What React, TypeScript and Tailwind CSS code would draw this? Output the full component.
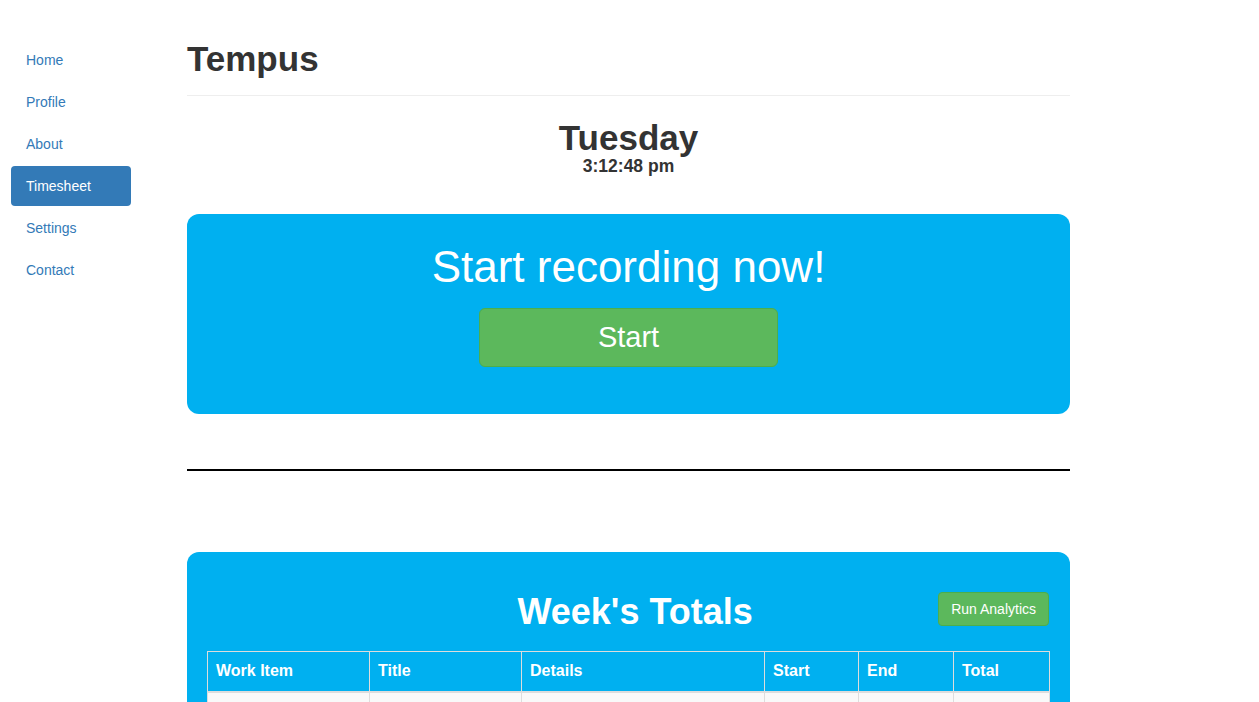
const navItems = ['Home', 'Profile', 'About', 'Timesheet', 'Settings', 'Contact'];

const columns = [
  { label: 'Work Item', width: 'w-[162px]' },
  { label: 'Title', width: 'w-[152px]' },
  { label: 'Details', width: 'w-[243px]' },
  { label: 'Start', width: 'w-[94px]' },
  { label: 'End', width: 'w-[95px]' },
  { label: 'Total', width: 'w-[96px]' }
];

export default function App() {
  return (
    <div className="min-h-screen bg-white text-[#333] font-['Liberation_Sans',Arial,sans-serif] flex pl-[11px]">
      {/* Sidebar */}
      <ul className="w-[120px] shrink-0 pt-[40px] flex flex-col gap-[2px]">
        {navItems.map((item) => (
          <li key={item}>
            <a
              href="#"
              className={
                item === 'Timesheet'
                  ? 'block px-[15px] py-[10px] text-[14px] leading-[20px] rounded-[4px] bg-[#337ab7] text-white'
                  : 'block px-[15px] py-[10px] text-[14px] leading-[20px] rounded-[4px] text-[#337ab7]'
              }
            >
              {item}
            </a>
          </li>
        ))}
      </ul>

      {/* Main */}
      <div className="ml-[56px] w-[883px] shrink-0 pb-[40px]">
        <div className="pt-[39px] pb-[16px] border-b border-[#eee]">
          <h1 className="text-[35px] leading-[40px] font-bold">Tempus</h1>
        </div>

        <div className="text-center mt-[22px]">
          <h2 className="text-[35px] leading-[39px] font-bold">Tuesday</h2>
          <p className="text-[17.5px] leading-[19px] font-bold">3:12:48 pm</p>
        </div>

        {/* Recording panel */}
        <div className="mt-[38px] bg-[#00b0f0] rounded-[12px] pt-[27px] pb-[47px] flex flex-col items-center">
          <h2 className="text-white text-[44px] leading-[52px]">Start recording now!</h2>
          <button className="mt-[15px] w-[299px] h-[59px] bg-[#5cb85c] border border-[#4cae4c] rounded-[6px] text-white text-[29px]">
            Start
          </button>
        </div>

        <div className="mt-[55px] border-t-2 border-black" />

        {/* Week's totals */}
        <div className="mt-[81px] bg-[#00b0f0] rounded-[12px] pt-[40px] pl-[20px] pr-[21px] pb-[30px]">
          <div className="flex items-start mb-[19px]">
            <h2 className="flex-1 text-center pl-[125px] text-white text-[36px] leading-[40px] font-bold">Week's Totals</h2>
            <button className="h-[34px] px-[12px] bg-[#5cb85c] border border-[#4cae4c] rounded-[4px] text-white text-[14px] leading-[20px]">
              Run Analytics
            </button>
          </div>
          <table className="w-[842px] border-collapse table-fixed">
            <thead>
              <tr>
                {columns.map((col) => (
                  <th
                    key={col.label}
                    className={`${col.width} border border-[#ddd] border-b-2 px-[8px] h-[40px] text-left text-white text-[16px] font-bold`}
                  >
                    {col.label}
                  </th>
                ))}
              </tr>
            </thead>
            <tbody>
              {[0, 1, 2].map((row) => (
                <tr key={row} className={row % 2 === 0 ? 'bg-[#f9f9f9]' : 'bg-white'}>
                  {columns.map((col) => (
                    <td key={col.label} className="border border-[#ddd] px-[8px] h-[37px]" />
                  ))}
                </tr>
              ))}
            </tbody>
          </table>
        </div>
      </div>
    </div>
  );
}
